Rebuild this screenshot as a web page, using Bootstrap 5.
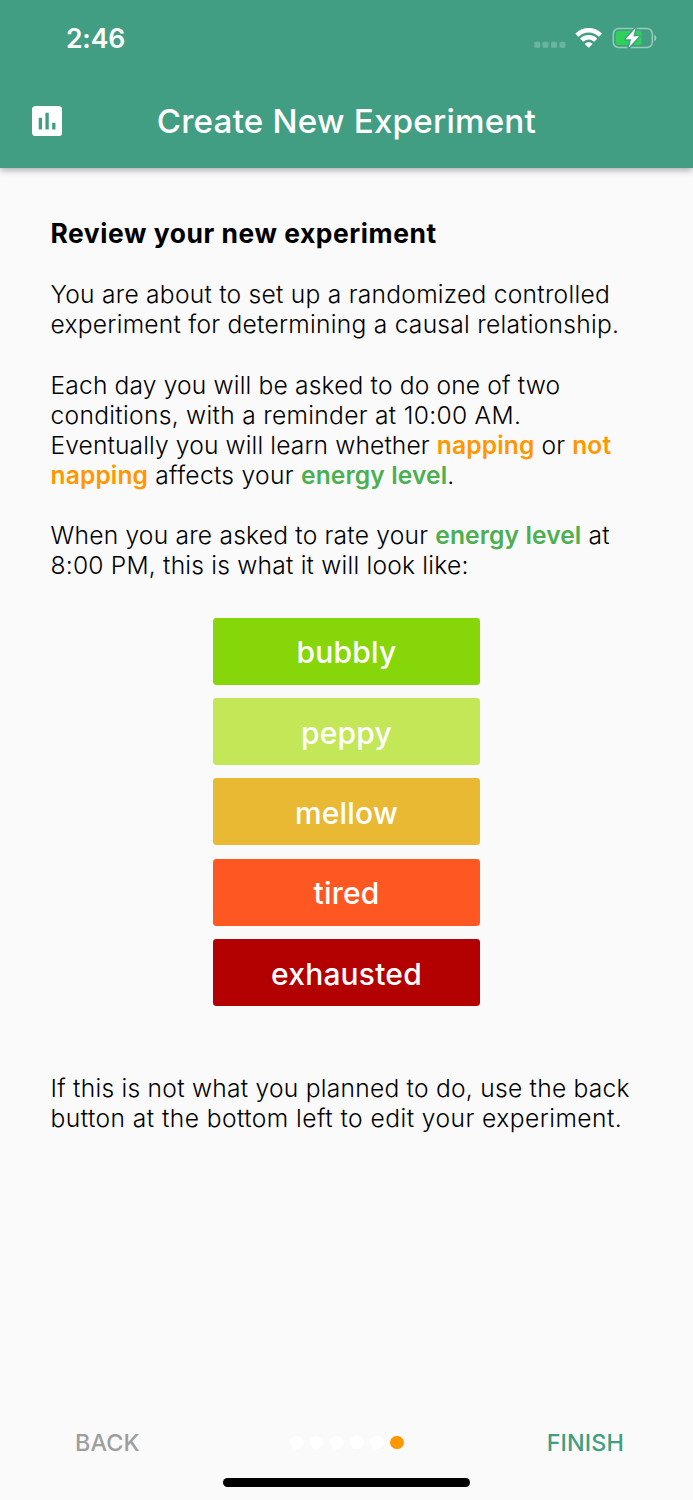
<!DOCTYPE html>
<html lang="en">
<head>
<meta charset="utf-8">
<meta name="viewport" content="width=device-width, initial-scale=1">
<title>Create New Experiment</title>
<link href="https://cdn.jsdelivr.net/npm/bootstrap@5.3.0/dist/css/bootstrap.min.css" rel="stylesheet">
<script src="https://cdn.jsdelivr.net/npm/bootstrap@5.3.0/dist/js/bootstrap.bundle.min.js" defer></script>
<style>
body { background: #fafafa; color: #000; font-family: Inter, "Liberation Sans", sans-serif; height: 1500px; overflow: hidden; }
.app-header { background: #429e83; color: #fff; height: 167.5px; box-shadow: 0 2px 7px rgba(0,0,0,.34); }
.status-bar { height: 75px; padding: 0 36px 0 66px; }
.clock { font-size: 26.6px; font-weight: 600; letter-spacing: -.2px; line-height: 77px; }
.status-icons { margin-top: 26px; }
.title-bar { height: 92px; padding-left: 32px; }
.page-title { font-size: 33.2px; font-weight: 500; line-height: 88px; margin: 0 0 1px 94.5px; letter-spacing: .19px; }
.review { padding: 49px 0 0 50.5px; font-size: 24.6px; font-weight: 300; line-height: 30.13px; }
.review h2 { font-size: 26.4px; font-weight: 700; line-height: 32px; letter-spacing: .56px; margin: 0 0 30.75px; }
.review p { margin: 0 0 30.13px; }
.review p.tight { margin-bottom: 0; }
.ln { display: block; white-space: nowrap; }
.cond { color: #ff9800; font-weight: 600; letter-spacing: .12px; }
.outcome { color: #4caf50; font-weight: 600; letter-spacing: .1px; }
.sp-0 { letter-spacing: .12px; }
.sp-1 { letter-spacing: .16px; }
.sp-2 { letter-spacing: .21px; }
.sp-3 { letter-spacing: .25px; }
.sp-4 { letter-spacing: .3px; }
.sp-5 { letter-spacing: .45px; }
.ratings { gap: 13.4px; margin: 37.25px 0 67px -50.5px; }
.ratings .rating { width: 267.8px; height: 66.95px; border-radius: 3.4px; border: 0; color: #fff; font-size: 30px; font-weight: 500; letter-spacing: .2px; padding: 2.6px 0 0; line-height: 64.3px; }
.r-bubbly { background: #87d60a; }
.r-peppy { background: #c3e757; }
.r-mellow { background: #e9b934; }
.r-tired { background: #ff5722; }
.r-exhausted { background: #b30000; }
.wizard-nav { padding: 0 69px 0 75px; height: 36px; margin-bottom: 17.5px; }
.wizard-nav .nav-btn { border: 0; padding: 0; font-size: 23.4px; font-weight: 500; line-height: 36px; letter-spacing: .1px; }
.wizard-nav .back { color: #9e9e9e; }
.wizard-nav .finish { color: #429e83; }
.steps { gap: 6.5px; margin-left: 7px; }
.step { width: 13.6px; height: 13.6px; border-radius: 50%; background: #fff; }
.step.current { background: #ff9800; }
.home-bar { width: 247.6px; height: 8.5px; border-radius: 5px; background: #000; margin-bottom: 13.5px; }
</style>
</head>
<body class="d-flex flex-column">
<header class="app-header flex-shrink-0">
  <div class="status-bar d-flex justify-content-between align-items-start">
    <span class="clock">2:46</span>
    <svg class="status-icons" width="123" height="24" viewBox="0 0 123 24" aria-hidden="true">
      <g fill="#fff" fill-opacity=".23">
        <rect x=".2" y="15.7" width="6" height="6" rx="1.5"/><rect x="8.5" y="15.7" width="6" height="6" rx="1.5"/><rect x="17" y="15.7" width="6" height="6" rx="1.5"/><rect x="25.4" y="15.7" width="6" height="6" rx="1.5"/>
      </g>
      <g fill="#fff">
        <path d="M41.7 7.2A18.9 18.9 0 0 1 67.7 7.2Q68 7.6 67.7 8L65.3 10.4Q64.9 10.7 64.5 10.4A14.4 14.4 0 0 0 44.9 10.4Q44.5 10.7 44.1 10.4L41.7 8Q41.4 7.6 41.7 7.2Z"/>
        <path d="M46.4 12.2A12.1 12.1 0 0 1 63 12.2Q63.4 12.6 63 13L60.5 15.4Q60.1 15.7 59.7 15.4A7.6 7.6 0 0 0 49.7 15.4Q49.3 15.7 48.9 15.4L46.4 13Q46 12.6 46.4 12.2Z"/>
        <path d="M51.1 17.4A5.6 5.6 0 0 1 58.3 17.4Q58.6 17.8 58.3 18.2L55.1 21.4Q54.7 21.8 54.3 21.4L51.1 18.2Q50.8 17.8 51.1 17.4Z"/>
      </g>
      <rect x="79.3" y="2.6" width="39" height="18.8" rx="5.2" fill="none" stroke="#fff" stroke-opacity=".45" stroke-width="1.5"/>
      <path d="M120.3 8.8Q122.4 9.8 122.4 12T120.3 15.2Z" fill="#fff" fill-opacity=".48"/>
      <rect x="81.8" y="5.1" width="25.8" height="13.8" rx="3" fill="#30d158"/>
      <path d="M101.5 2.2L91.5 13.3H97.2L94.8 21.6L105.2 10.3H99.4Z" fill="#fff" stroke="#429e83" stroke-width="3" paint-order="stroke" stroke-linejoin="round"/>
    </svg>
  </div>
  <div class="title-bar d-flex align-items-center">
    <svg width="30.2" height="30.2" viewBox="3 3 18 18" fill="#fff" aria-hidden="true"><path d="M19 3H5c-1.1 0-2 .9-2 2v14c0 1.1.9 2 2 2h14c1.1 0 2-.9 2-2V5c0-1.1-.9-2-2-2zM9 17H7v-7h2v7zm4 0h-2V7h2v10zm4 0h-2v-4h2v4z"/></svg>
    <h1 class="page-title">Create New Experiment</h1>
  </div>
</header>
<main class="review">
  <h2>Review your new experiment</h2>
  <p><span class="ln sp-3">You are about to set up a randomized controlled</span>
  <span class="ln sp-3">experiment for determining a causal relationship.</span></p>
  <p><span class="ln sp-1">Each day you will be asked to do one of two</span>
  <span class="ln sp-4">conditions, with a reminder at 10:00 AM.</span>
  <span class="ln sp-0">Eventually you will learn whether <span class="cond">napping</span> or <span class="cond">not</span></span>
  <span class="ln sp-4"><span class="cond">napping</span> affects your <span class="outcome">energy level</span>.</span></p>
  <p class="tight"><span class="ln sp-2">When you are asked to rate your <span class="outcome">energy level</span> at</span>
  <span class="ln sp-2">8:00 PM, this is what it will look like:</span></p>
  <div class="ratings d-flex flex-column align-items-center">
    <button type="button" class="btn rating r-bubbly">bubbly</button>
    <button type="button" class="btn rating r-peppy">peppy</button>
    <button type="button" class="btn rating r-mellow">mellow</button>
    <button type="button" class="btn rating r-tired">tired</button>
    <button type="button" class="btn rating r-exhausted">exhausted</button>
  </div>
  <p class="tight"><span class="ln sp-3">If this is not what you planned to do, use the back</span>
  <span class="ln sp-5">button at the bottom left to edit your experiment.</span></p>
</main>
<footer class="mt-auto d-flex flex-column">
  <nav class="wizard-nav d-flex justify-content-between align-items-center">
    <button type="button" class="btn nav-btn back">BACK</button>
    <div class="steps d-flex">
      <span class="step"></span><span class="step"></span><span class="step"></span><span class="step"></span><span class="step"></span><span class="step current"></span>
    </div>
    <button type="button" class="btn nav-btn finish">FINISH</button>
  </nav>
  <div class="home-bar align-self-center"></div>
</footer>
</body>
</html>
